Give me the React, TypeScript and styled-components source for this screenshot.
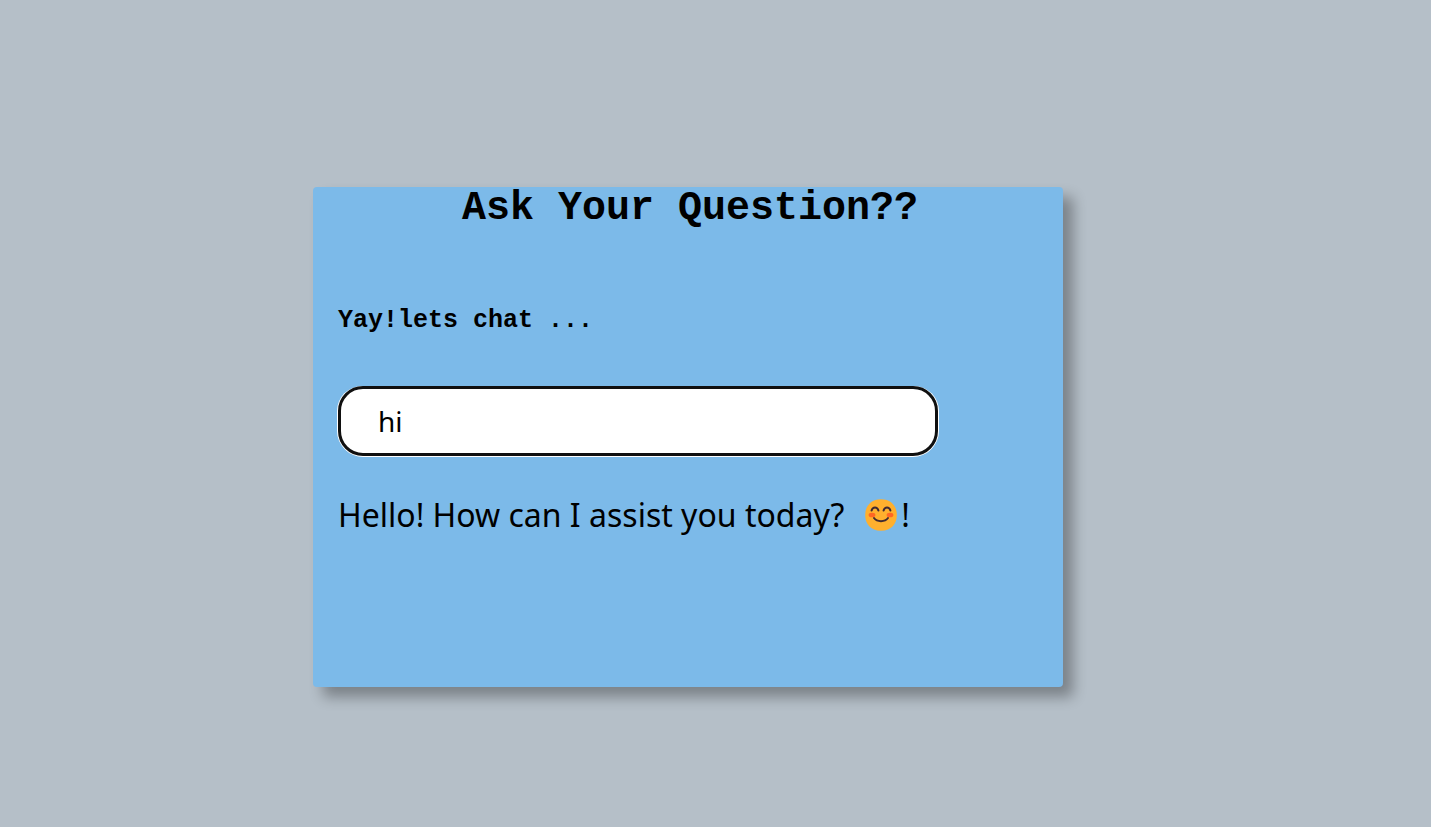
import React, { useState } from "react";
import styled, { createGlobalStyle } from "styled-components";

const GlobalStyle = createGlobalStyle`
  *, *::before, *::after { box-sizing: border-box; }
  body { margin: 0; background: #b5bfc8; color: #000; }
`;

const Page = styled.main`
  min-height: 100vh;
  padding: 47px 55px 0 0;
  display: flex;
  align-items: center;
  justify-content: center;
`;

const ChatCard = styled.section`
  width: 100%;
  max-width: 750px;
  min-height: 500px;
  display: flex;
  flex-direction: column;
  background: #7cbae9;
  border-radius: 4px;
  box-shadow: 10px 10px 14px rgba(0, 0, 0, 0.32);
`;

const Title = styled.h1`
  margin: 0;
  padding-left: 4px;
  font: 700 40px/44px "Courier New", "Liberation Mono", monospace;
  text-align: center;
`;

const ChatForm = styled.form`
  display: flex;
  flex-direction: column;
  align-items: flex-start;
  padding: 76px 25px 0;
`;

const Prompt = styled.label`
  font: 700 25px/28px "Courier New", "Liberation Mono", monospace;
`;

const QuestionInput = styled.input`
  width: 100%;
  max-width: 600px;
  height: 70px;
  margin-top: 51px;
  padding: 0 37px;
  border: 3px solid #101010;
  border-radius: 25px;
  outline: none;
  background: #fff;
  box-shadow: -1px 0 #fff, 1px 0 #fff, 0 1px #fff;
  color: #000;
  font: 28px "Noto Sans", sans-serif;
`;

const Answer = styled.p`
  display: flex;
  align-items: center;
  margin: 0;
  padding: 39px 25px 0;
  font: 32px/40px "Noto Sans", sans-serif;
`;

const Emoji = styled.svg`
  width: 32px;
  height: 32px;
  margin: 0 4px 0 21px;
`;

function SmilingFace() {
  return (
    <Emoji viewBox="0 0 32 32" role="img" aria-label="Smiling face">
      <path
        fill="#ffb02e"
        d="M16 0.2C26.5 0.2 31.8 7.3 31.8 16S26.5 31.8 16 31.8S0.2 24.7 0.2 16S5.5 0.2 16 0.2Z"
      />
      <ellipse cx="7" cy="16" rx="3.4" ry="2.3" fill="#ff6723" />
      <ellipse cx="25" cy="16" rx="3.4" ry="2.3" fill="#ff6723" />
      <g fill="none" stroke="#402a32" strokeWidth="2" strokeLinecap="round">
        <path d="M6.6 11.6C7.6 7.4 12.4 7.4 13.4 11.6" />
        <path d="M18.6 11.6C19.6 7.4 24.4 7.4 25.4 11.6" />
        <path d="M9 19C12 23.2 20 23.2 23 19" />
      </g>
    </Emoji>
  );
}

export default function App() {
  const [question, setQuestion] = useState("hi");

  return (
    <>
      <GlobalStyle />
      <Page>
        <ChatCard>
          <Title>Ask Your Question??</Title>
          <ChatForm onSubmit={(event) => event.preventDefault()}>
            <Prompt htmlFor="question">Yay!lets chat ...</Prompt>
            <QuestionInput
              id="question"
              type="text"
              autoComplete="off"
              value={question}
              onChange={(event) => setQuestion(event.target.value)}
            />
          </ChatForm>
          <Answer>
            <span>Hello! How can I assist you today?</span>
            <SmilingFace />
            <span>!</span>
          </Answer>
        </ChatCard>
      </Page>
    </>
  );
}
